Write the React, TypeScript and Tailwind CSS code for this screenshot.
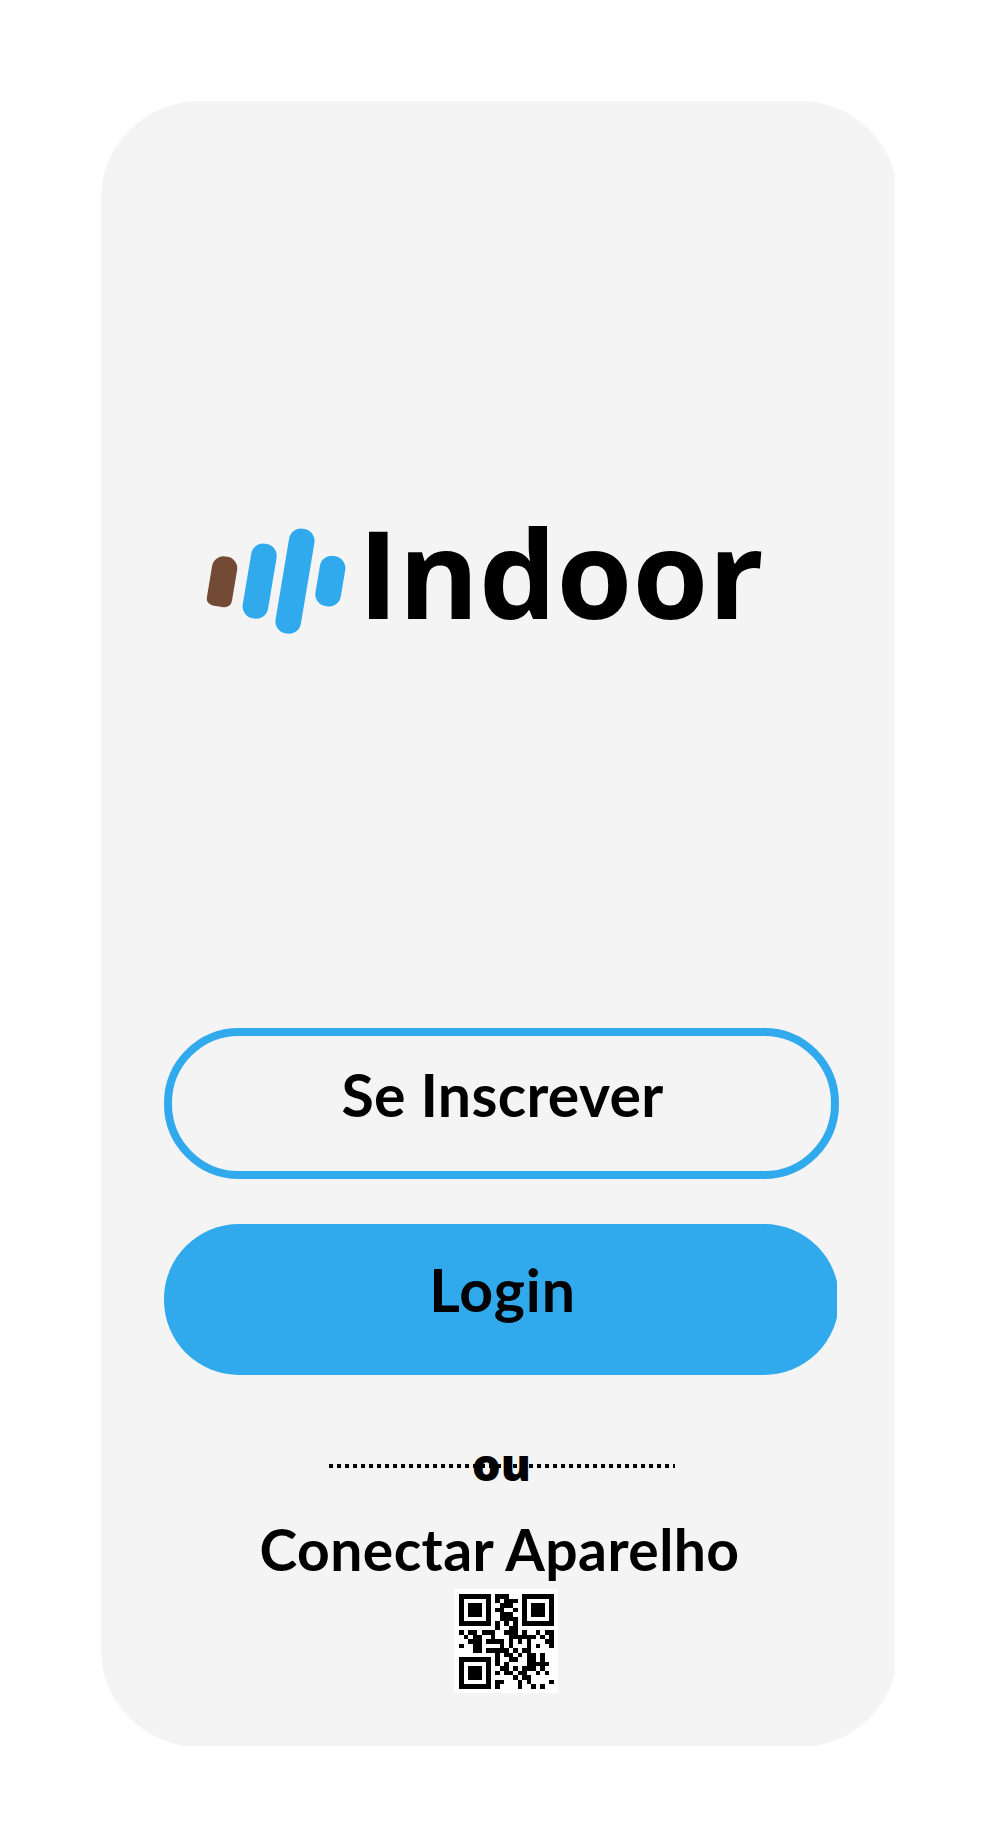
const QR_ROWS = [
  "#######.###...#######",
  "#.....#.#.###.#.....#",
  "#.###.#..###..#.###.#",
  "#.###.#.##..#.#.###.#",
  "#.###.#..###..#.###.#",
  "#.....#..####.#.....#",
  "#######.#.#.#.#######",
  "........#..##........",
  "#.##.###..###.#..#.##",
  ".#.##..#...######.#.#",
  "..###.####.#.#.#...##",
  "#..##....#.#...#.#..#",
  "...##.#####.#.##.....",
  "........#.##.#.##.#..",
  "#######.#..##..##.#..",
  "#.....#.#.#....#####.",
  "#.###.#..##.#.###.#..",
  "#.###.#.#.##.##..#.#.",
  "#.###.#.....#.##.....",
  "#.....#.##...#.#....#",
  "#######.#....#..#.#..",
];

function Logo() {
  return (
    <svg viewBox="0 0 450 360" className="mt-[7px] ml-[3px] h-[120px] w-[150px] shrink-0" aria-hidden="true">
      <g fill="#31a9ed" transform="translate(1 0)">
        <rect x="130.5" y="70" width="77" height="227" rx="36" transform="rotate(9.5 169 183.5)" />
        <rect x="236.5" y="24.5" width="77" height="318" rx="36" transform="rotate(9.5 275 183.5)" />
        <rect x="342.5" y="107.5" width="77" height="152" rx="36" transform="rotate(9.5 381 183.5)" />
      </g>
      <path
        fill="#734a33"
        transform="translate(58 185) rotate(9.5)"
        d="M-38 -41A35 35 0 0 1 -3 -76H3A35 35 0 0 1 38 -41V52A22 22 0 0 1 16 75H-17A21 21 0 0 1 -38 52Z"
      />
    </svg>
  );
}

function QrCode() {
  return (
    <svg viewBox="0 0 21 21" className="h-[95px] w-[95px]" shapeRendering="crispEdges" aria-hidden="true">
      {QR_ROWS.flatMap((row, y) =>
        row.split("").map((cell, x) =>
          cell === "#" ? <rect key={`${x}-${y}`} x={x} y={y} width="1" height="1" /> : null,
        ),
      )}
    </svg>
  );
}

export default function App() {
  return (
    <div className="h-[1848px] w-[998px] bg-white pt-[101px] pl-[101px] text-black">
      <main className="h-[1645px] w-[794px] overflow-hidden">
        <div className="flex h-[1646px] w-[797px] flex-col rounded-[98px] bg-[#f4f4f4] pt-[412px] pl-[63px]">
          <header className="flex h-[122px] pl-[36px]">
            <Logo />
            <h1 className="ml-[5px] -mt-px font-['Open_Sans',sans-serif] text-[122.5px] leading-[120px] font-bold whitespace-nowrap">
              Indoor
            </h1>
          </header>

          <button className="mt-[393px] flex h-[151px] w-[675px] shrink-0 justify-center rounded-[75px] border-8 border-[#31a9ed] pt-[29px] pl-[2px] font-['Lato',sans-serif] text-[59px] leading-[60px] font-bold tracking-[0.3px] whitespace-nowrap">
            Se Inscrever
          </button>
          <div className="mt-[45px] h-[151px] w-[673px] shrink-0 overflow-hidden">
            <button className="flex h-[151px] w-[675px] justify-center rounded-[75px] bg-[#31a9ed] pt-[36px] pl-[2px] font-['Lato',sans-serif] text-[59px] leading-[60px] font-bold tracking-[0.9px] whitespace-nowrap">
              Login
            </button>
          </div>

          <div className="relative mt-[66px] ml-[165px] flex h-[50px] w-[346px] justify-center">
            <div className="absolute top-[23px] left-0 h-[4px] w-full bg-[repeating-linear-gradient(90deg,#000_0_4px,transparent_4px_8px)]" />
            <span className="-mt-[2px] -ml-px font-['Open_Sans',sans-serif] text-[45px] leading-[50px] font-extrabold">ou</span>
          </div>

          <p className="mt-[28px] w-[671px] text-center font-['Lato',sans-serif] text-[57px] leading-[60px] font-bold tracking-[0.42px] whitespace-nowrap">
            Conectar Aparelho
          </p>
          <div className="mt-[10px] ml-[290px] flex h-[104px] w-[104px] items-center justify-center bg-white">
            <QrCode />
          </div>
        </div>
      </main>
    </div>
  );
}
